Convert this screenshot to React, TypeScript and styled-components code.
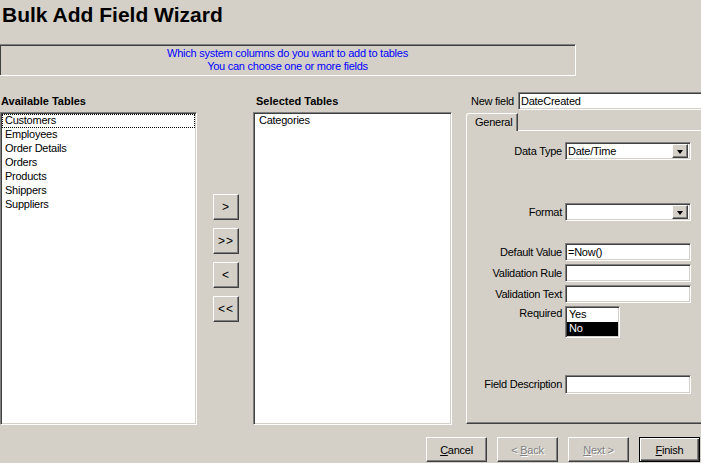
import React from 'react';
import styled, { createGlobalStyle, css } from 'styled-components';

const GlobalStyle = createGlobalStyle`
  body {
    margin: 0;
    background: #d4d0c8;
    font-family: 'Liberation Sans', Arial, sans-serif;
    font-size: 11px;
    color: #000;
  }
  * {
    box-sizing: border-box;
  }
`;

const sunken = css`
  border: 1px solid;
  border-color: #808080 #ffffff #ffffff #808080;
  box-shadow: inset 1px 1px #404040, inset -1px -1px #d4d0c8;
`;

const raised = css`
  border: 1px solid;
  border-color: #ffffff #404040 #404040 #ffffff;
  box-shadow: inset -1px -1px #808080;
`;

const Window = styled.div`
  width: 701px;
  height: 463px;
  overflow: hidden;
  background: #d4d0c8;
  display: flex;
  flex-direction: column;
  letter-spacing: -0.25px;
`;

const Title = styled.h1`
  margin: 0;
  height: 44px;
  padding: 3px 0 0 2px;
  font-size: 21px;
  line-height: 24px;
  font-weight: bold;
  letter-spacing: 0;
`;

const Message = styled.div`
  ${sunken};
  width: 577px;
  height: 32px;
  margin-left: -1px;
  padding-top: 2px;
  color: #0000ff;
  text-align: center;
  line-height: 13px;
`;

const Main = styled.div`
  display: flex;
  margin-top: 16px;
  height: 333px;
`;

const ListColumn = styled.div<{ $width: number }>`
  width: ${(p) => p.$width}px;
  flex-shrink: 0;
  display: flex;
  flex-direction: column;
`;

const Caption = styled.div<{ $indent?: number }>`
  height: 20px;
  padding: 2px 0 0 ${(p) => p.$indent ?? 1}px;
  font-weight: bold;
  line-height: 14px;
  letter-spacing: 0;
`;

const ListBox = styled.div<{ $height: number; $width?: number }>`
  ${sunken};
  background: #fff;
  height: ${(p) => p.$height}px;
  width: ${(p) => (p.$width ? `${p.$width}px` : 'auto')};
  padding: 1px 1px;
  overflow: hidden;
`;

const ListItem = styled.div<{ $focused?: boolean; $selected?: boolean; $indent?: number }>`
  height: 14px;
  line-height: 13px;
  padding-left: ${(p) => p.$indent ?? 3}px;
  white-space: nowrap;
  ${(p) => p.$focused && css`outline: 1px dotted #000; outline-offset: -1px;`}
  ${(p) =>
    p.$selected &&
    css`
      background: #000;
      color: #fff;
    `}
`;

const ArrowColumn = styled.div`
  width: 56px;
  flex-shrink: 0;
  padding: 102px 0 0 16px;
  display: flex;
  flex-direction: column;
  gap: 8px;
`;

const WinButton = styled.button<{ $w: number; $h: number; $default?: boolean }>`
  ${raised};
  width: ${(p) => p.$w}px;
  height: ${(p) => p.$h}px;
  flex-shrink: 0;
  padding: 0;
  background: #d4d0c8;
  font-family: 'Liberation Sans', Arial, sans-serif;
  font-size: 11px;
  letter-spacing: -0.25px;
  color: #000;
  ${(p) =>
    p.$default &&
    css`
      border: 1px solid #000;
      box-shadow: inset 1px 1px #fff, inset -1px -1px #404040, inset -2px -2px #808080;
    `}
  &:disabled {
    color: #808080;
    text-shadow: 1px 1px #fff;
  }
`;

const ArrowGlyph = styled.span`
  font-size: 12px;
  letter-spacing: 1px;
`;

const RightPane = styled.div`
  width: 240px;
  flex-shrink: 0;
  margin-left: 14px;
  display: flex;
  flex-direction: column;
`;

const NewFieldRow = styled.div`
  display: flex;
  align-items: center;
  gap: 4px;
  padding-left: 5px;
  height: 18px;
`;

const TextBox = styled.div<{ $w?: number; $h?: number }>`
  ${sunken};
  background: #fff;
  width: ${(p) => (p.$w ? `${p.$w}px` : 'auto')};
  flex: ${(p) => (p.$w ? 'none' : '1')};
  height: ${(p) => p.$h ?? 18}px;
  padding-left: 2px;
  line-height: 16px;
  white-space: nowrap;
`;

const TabStrip = styled.div`
  display: flex;
  margin-top: 3px;
  height: 18px;
  margin-bottom: -1px;
  position: relative;
  z-index: 1;
`;

const Tab = styled.div`
  width: 52px;
  border-top: 1px solid #fff;
  border-left: 1px solid #fff;
  border-right: 1px solid #404040;
  border-top-left-radius: 3px;
  box-shadow: inset -1px 0 #808080;
  background: #d4d0c8;
  padding-left: 8px;
  line-height: 16px;
`;

const TabPanel = styled.div`
  height: 294px;
  border-top: 1px solid #fff;
  border-left: 1px solid #fff;
  border-bottom: 1px solid #404040;
  box-shadow: inset 0 -1px #808080;
  padding-top: 11px;
  display: flex;
  flex-direction: column;
`;

const FieldRow = styled.div<{ $mt: number }>`
  display: grid;
  grid-template-columns: 95px 126px;
  column-gap: 3px;
  margin-top: ${(p) => p.$mt}px;
  align-items: start;
`;

const FieldLabel = styled.div<{ $h?: number }>`
  text-align: right;
  line-height: ${(p) => p.$h ?? 18}px;
  white-space: nowrap;
`;

const Combo = styled.div`
  ${sunken};
  background: #fff;
  height: 18px;
  display: flex;
  align-items: center;
  padding: 2px;
  line-height: 14px;
`;

const ComboText = styled.span`
  flex: 1;
`;

const DropButton = styled.div`
  ${raised};
  width: 16px;
  height: 14px;
  background: #d4d0c8;
  display: flex;
  align-items: center;
  justify-content: center;
  &::after {
    content: '';
    border-left: 3.5px solid transparent;
    border-right: 3.5px solid transparent;
    border-top: 4px solid #000;
    margin-top: 1px;
  }
`;

const Footer = styled.div`
  display: flex;
  justify-content: flex-end;
  gap: 10px;
  padding-right: 1px;
  margin-top: 12px;
`;

const tables = ['Customers', 'Employees', 'Order Details', 'Orders', 'Products', 'Shippers', 'Suppliers'];

const ComboBox: React.FC<{ value?: string }> = ({ value }) => (
  <Combo>
    <ComboText>{value}</ComboText>
    <DropButton />
  </Combo>
);

const App: React.FC = () => {
  return (
    <>
      <GlobalStyle />
      <Window>
        <Title>Bulk Add Field Wizard</Title>
        <Message>
          Which system columns do you want to add to tables
          <br />
          You can choose one or more fields
        </Message>

        <Main>
          <ListColumn $width={197}>
            <Caption>Available Tables</Caption>
            <ListBox $height={313}>
              {tables.map((t, i) => (
                <ListItem key={t} $focused={i === 0}>
                  {t}
                </ListItem>
              ))}
            </ListBox>
          </ListColumn>

          <ArrowColumn>
            <WinButton $w={26} $h={26}><ArrowGlyph>&gt;</ArrowGlyph></WinButton>
            <WinButton $w={26} $h={26}><ArrowGlyph>&gt;&gt;</ArrowGlyph></WinButton>
            <WinButton $w={26} $h={26}><ArrowGlyph>&lt;</ArrowGlyph></WinButton>
            <WinButton $w={26} $h={26}><ArrowGlyph>&lt;&lt;</ArrowGlyph></WinButton>
          </ArrowColumn>

          <ListColumn $width={199}>
            <Caption $indent={3}>Selected Tables</Caption>
            <ListBox $height={313}>
              <ListItem $indent={4}>Categories</ListItem>
            </ListBox>
          </ListColumn>

          <RightPane>
            <NewFieldRow>
              New field
              <TextBox>DateCreated</TextBox>
            </NewFieldRow>
            <TabStrip>
              <Tab>General</Tab>
            </TabStrip>
            <TabPanel>
              <FieldRow $mt={0}>
                <FieldLabel>Data Type</FieldLabel>
                <ComboBox value="Date/Time" />
              </FieldRow>
              <FieldRow $mt={43}>
                <FieldLabel>Format</FieldLabel>
                <ComboBox />
              </FieldRow>
              <FieldRow $mt={22}>
                <FieldLabel>Default Value</FieldLabel>
                <TextBox>=Now()</TextBox>
              </FieldRow>
              <FieldRow $mt={3}>
                <FieldLabel>Validation Rule</FieldLabel>
                <TextBox />
              </FieldRow>
              <FieldRow $mt={3}>
                <FieldLabel>Validation Text</FieldLabel>
                <TextBox />
              </FieldRow>
              <FieldRow $mt={3}>
                <FieldLabel $h={15}>Required</FieldLabel>
                <ListBox $height={32} $width={55}>
                  <ListItem $indent={2}>Yes</ListItem>
                  <ListItem $indent={2} $selected>
                    No
                  </ListItem>
                </ListBox>
              </FieldRow>
              <FieldRow $mt={37}>
                <FieldLabel $h={19}>Field Description</FieldLabel>
                <TextBox $h={19} />
              </FieldRow>
            </TabPanel>
          </RightPane>
        </Main>

        <Footer>
          <WinButton $w={61} $h={25}>
            <u>C</u>ancel
          </WinButton>
          <WinButton $w={61} $h={25} disabled>
            &lt; <u>B</u>ack
          </WinButton>
          <WinButton $w={61} $h={25} disabled>
            <u>N</u>ext &gt;
          </WinButton>
          <WinButton $w={61} $h={25} $default>
            <u>F</u>inish
          </WinButton>
        </Footer>
      </Window>
    </>
  );
};

export default App;
